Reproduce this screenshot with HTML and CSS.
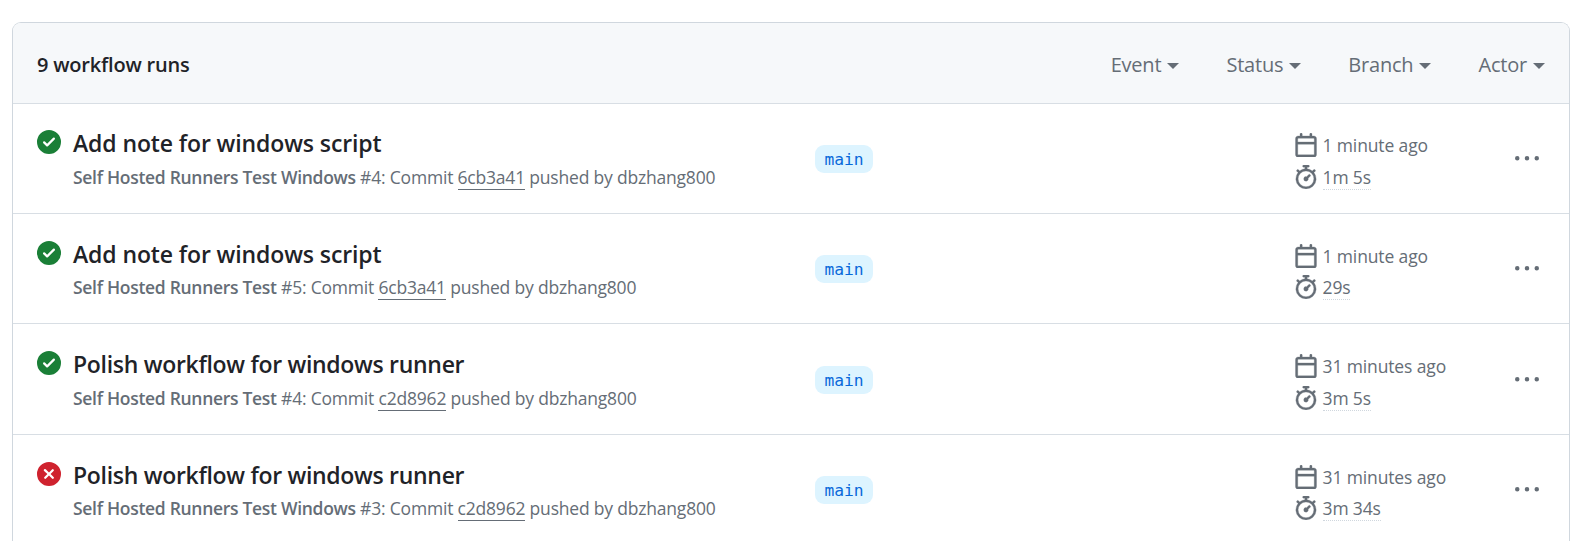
FILE: index.html
```html
<!DOCTYPE html>
<html lang="en">
<head>
<meta charset="utf-8">
<title>Workflow runs</title>
<link rel="stylesheet" href="styles.css">
</head>
<body>
<svg class="defs" width="0" height="0">
  <symbol id="ok" viewBox="0 0 16 16"><path fill-rule="evenodd" d="M8 16A8 8 0 1 0 8 0a8 8 0 0 0 0 16Zm3.78-9.72a.75.75 0 0 0-1.06-1.06L6.75 9.19 5.28 7.72a.75.75 0 0 0-1.06 1.06l2 2a.75.75 0 0 0 1.06 0l4.5-4.5Z"/></symbol>
  <symbol id="fail" viewBox="0 0 16 16"><path fill-rule="evenodd" d="M8 16A8 8 0 1 0 8 0a8 8 0 0 0 0 16ZM5.28 4.72a.75.75 0 0 0-.56 1.28L6.94 8l-2 2A.75.75 0 0 0 6 11.06l2-2 2 2A.75.75 0 1 0 11.06 10l-2-2 2-2A.75.75 0 0 0 10 4.94l-2 2-2-2a.75.75 0 0 0-.72-.22Z"/></symbol>
  <symbol id="calendar" viewBox="0 0 16 16"><path d="M4.75 0a.75.75 0 0 1 .75.75V2h5V.75a.75.75 0 0 1 1.5 0V2h1.25c.966 0 1.75.784 1.75 1.75v10.5A1.75 1.75 0 0 1 13.25 16H2.75A1.75 1.75 0 0 1 1 14.25V3.75C1 2.784 1.784 2 2.75 2H4V.75A.75.75 0 0 1 4.75 0ZM2.5 7.5v6.75c0 .138.112.25.25.25h10.5a.25.25 0 0 0 .25-.25V7.5Zm10.75-4H2.75a.25.25 0 0 0-.25.25V6h11V3.75a.25.25 0 0 0-.25-.25Z"/></symbol>
  <symbol id="stopwatch" viewBox="0 0 16 16"><path d="M5.75.75A.75.75 0 0 1 6.5 0h3a.75.75 0 0 1 0 1.5h-.75v1l-.001.041a6.724 6.724 0 0 1 3.464 1.435l.007-.006.75-.75a.749.749 0 0 1 1.275.326.749.749 0 0 1-.215.734l-.75.75-.006.007a6.75 6.75 0 1 1-10.548 0L2.72 5.03l-.75-.75a.751.751 0 0 1 .018-1.042.751.751 0 0 1 1.042-.018l.75.75.007.006A6.72 6.72 0 0 1 7.25 2.541V1.5H6.5a.75.75 0 0 1-.75-.75ZM8 14.5a5.25 5.25 0 1 0-.001-10.501A5.25 5.25 0 0 0 8 14.5Zm.389-6.7 1.33-1.33a.75.75 0 1 1 1.061 1.06L9.45 8.861A1.503 1.503 0 0 1 8 10.75a1.499 1.499 0 1 1 .389-2.95Z"/></symbol>
  <symbol id="kebab" viewBox="0 0 16 16"><path d="M8 9a1.5 1.5 0 1 0 0-3 1.5 1.5 0 0 0 0 3ZM1.5 9a1.5 1.5 0 1 0 0-3 1.5 1.5 0 0 0 0 3Zm13 0a1.5 1.5 0 1 0 0-3 1.5 1.5 0 0 0 0 3Z"/></symbol>
</svg>
<main class="box">
  <header class="head">
    <strong class="count">9 workflow runs</strong>
    <nav class="filters">
      <span class="filter">Event<i class="caret"></i></span>
      <span class="filter">Status<i class="caret"></i></span>
      <span class="filter">Branch<i class="caret"></i></span>
      <span class="filter">Actor<i class="caret"></i></span>
    </nav>
  </header>

  <section class="row first">
    <svg class="state ok"><use href="#ok"/></svg>
    <div class="info">
      <div class="title wide">Add note for windows script</div>
      <div class="sub"><b>Self Hosted Runners Test Windows</b> <span>#4: Commit <a class="sha">6cb3a41</a> pushed by dbzhang800</span></div>
    </div>
    <div class="branch"><span class="label">main</span></div>
    <div class="meta">
      <div class="fact"><svg class="icon"><use href="#calendar"/></svg><span>1 minute ago</span></div>
      <div class="fact"><svg class="icon"><use href="#stopwatch"/></svg><span class="dur">1m 5s</span></div>
    </div>
    <svg class="kebab"><use href="#kebab"/></svg>
  </section>

  <section class="row tight">
    <svg class="state ok"><use href="#ok"/></svg>
    <div class="info">
      <div class="title wide">Add note for windows script</div>
      <div class="sub"><b>Self Hosted Runners Test</b> <span>#5: Commit <a class="sha">6cb3a41</a> pushed by dbzhang800</span></div>
    </div>
    <div class="branch"><span class="label">main</span></div>
    <div class="meta">
      <div class="fact"><svg class="icon"><use href="#calendar"/></svg><span>1 minute ago</span></div>
      <div class="fact"><svg class="icon"><use href="#stopwatch"/></svg><span class="dur">29s</span></div>
    </div>
    <svg class="kebab"><use href="#kebab"/></svg>
  </section>

  <section class="row tall">
    <svg class="state ok"><use href="#ok"/></svg>
    <div class="info">
      <div class="title">Polish workflow for windows runner</div>
      <div class="sub"><b>Self Hosted Runners Test</b> <span>#4: Commit <a class="sha">c2d8962</a> pushed by dbzhang800</span></div>
    </div>
    <div class="branch"><span class="label">main</span></div>
    <div class="meta">
      <div class="fact"><svg class="icon"><use href="#calendar"/></svg><span>31 minutes ago</span></div>
      <div class="fact"><svg class="icon"><use href="#stopwatch"/></svg><span class="dur">3m 5s</span></div>
    </div>
    <svg class="kebab"><use href="#kebab"/></svg>
  </section>

  <section class="row tight">
    <svg class="state fail"><use href="#fail"/></svg>
    <div class="info">
      <div class="title">Polish workflow for windows runner</div>
      <div class="sub"><b>Self Hosted Runners Test Windows</b> <span>#3: Commit <a class="sha">c2d8962</a> pushed by dbzhang800</span></div>
    </div>
    <div class="branch"><span class="label">main</span></div>
    <div class="meta">
      <div class="fact"><svg class="icon"><use href="#calendar"/></svg><span>31 minutes ago</span></div>
      <div class="fact"><svg class="icon"><use href="#stopwatch"/></svg><span class="dur">3m 34s</span></div>
    </div>
    <svg class="kebab"><use href="#kebab"/></svg>
  </section>
</main>
</body>
</html>
```
FILE: styles.css
```css
* { box-sizing: border-box; }
body {
  margin: 0;
  height: 541px;
  overflow: hidden;
  padding: 22px 6px 0 12px;
  background: #fff;
  color: #1f2328;
  font-family: "Open Sans", "Noto Sans", sans-serif;
}
.defs { position: absolute; }
svg { display: block; fill: currentColor; flex: none; }
.box {
  border: 1px solid #d0d7de;
  border-bottom: 0;
  border-radius: 9px 9px 0 0;
  overflow: hidden;
  height: 519px;
}
.head {
  display: flex;
  align-items: center;
  justify-content: space-between;
  height: 80px;
  padding: 2px 24px 0;
  background: #f6f8fa;
}
.count { font-size: 20px; font-weight: 600; letter-spacing: -0.2px; }
.filters { display: flex; gap: 47px; color: #656d76; font-size: 20px; letter-spacing: -0.2px; }
.filter { display: flex; align-items: center; }
.caret {
  margin: 4px 0 0 6px;
  border: 6px solid transparent;
  border-top-color: currentColor;
  border-bottom: 0;
}
.row {
  display: grid;
  grid-template-columns: 24px 730px 503px 221px 24px;
  align-items: start;
  height: 110px;
  padding: 27px 0 0 24px;
  border-top: 1px solid #d8dee4;
}
.row.first { padding-top: 26px; }
.row.tall { height: 111px; }
.state.ok { color: #1a7f37; }
.state.fail { color: #cf222e; }
.state, .icon, .kebab { width: 24px; height: 24px; }
.icon { stroke: currentColor; stroke-width: .2px; }
.info { padding-left: 12px; white-space: nowrap; }
.title { font-size: 23px; line-height: 36px; margin-top: -5px; font-weight: 600; letter-spacing: -0.3px; }
.title.wide { letter-spacing: -0.11px; }
.sub { margin-top: 3px; color: #656d76; font-size: 17.5px; line-height: 27px; letter-spacing: -0.2px; }
.sub b { font-weight: 600; letter-spacing: -0.3px; }
.sha { display: inline-block; line-height: 24px; border-bottom: 1px solid #656d76; }
.branch { padding: 15px 0 0 24px; }
.label {
  display: block;
  width: 58px;
  height: 28px;
  border-radius: 9px;
  background: #ddf4ff;
  color: #0969da;
  text-align: center;
  font: 16.3px/29px "DejaVu Sans Mono", monospace;
}
.meta { padding-top: 3px; color: #656d76; font-size: 17.5px; letter-spacing: -0.13px; }
.fact { display: flex; gap: 4.5px; height: 32px; line-height: 25px; white-space: nowrap; }
.dur { height: 25px; border-bottom: 1px dotted #d0d7de; }
.kebab { margin-top: 17px; color: #656d76; }
.tight .sub { margin-top: 2px; }
.tight .branch { padding-top: 14px; }
.tight .kebab { margin-top: 16px; }
.tight .fact { height: 31px; }
```
